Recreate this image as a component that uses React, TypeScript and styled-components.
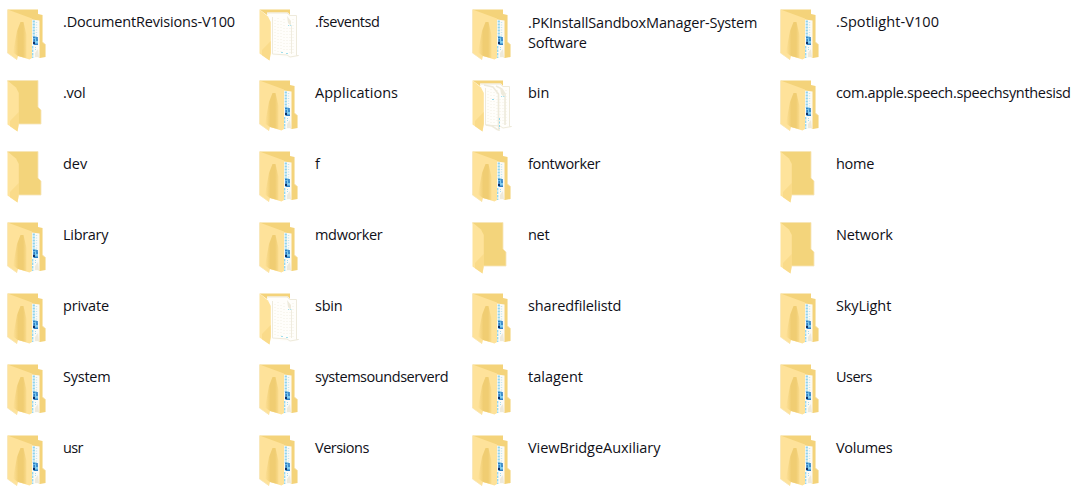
import React from 'react';
import styled, { createGlobalStyle } from 'styled-components';

const GlobalStyle = createGlobalStyle`
  body { margin: 0; background: #fff; overflow: hidden; }
`;

const FolderGrid = styled.main`
  display: grid;
  grid-template-columns: 252px 213px 308px 292px;
  grid-auto-rows: 71px;
  width: 1079px;
  height: 494px;
  padding: 8px 0 0 7px;
  box-sizing: border-box;
  overflow: hidden;
  font-family: 'Open Sans', 'Noto Sans', sans-serif;
  color: #101018;
`;

const FolderTile = styled.div`
  display: flex;
  align-items: flex-start;
`;

const FolderArt = styled.svg`
  flex: none;
  width: 42px;
  height: 56px;
`;

const Label = styled.span<{ $tracking: number; $lines: number }>`
  margin: ${p => (p.$lines === 2 ? 5 : 4)}px 0 0 14px;
  font-size: 14.5px;
  line-height: 20px;
  letter-spacing: ${p => p.$tracking}px;
  white-space: pre;
`;

type Kind = 'full' | 'empty' | 'page' | 'pages';

const Flap = () => (
  <>
    <path d="M.5 1.5 9 8.5 11.8 14V45L10.5 52.5.5 45.5Z" fill="#fee39b" />
    <path d="M3 42 11.8 33V45L10.5 52.5 3 47.2Z" fill="#f7d781" opacity=".65" />
  </>
);

function FolderIcon({ kind }: { kind: Kind }) {
  return (
    <FolderArt viewBox="0 0 42 56" aria-hidden="true">
      <defs>
        <linearGradient id="crease" x1="0" x2="1">
          <stop offset="0" stopColor="#f0cd72" stopOpacity="0" />
          <stop offset=".4" stopColor="#f0cd72" />
          <stop offset=".75" stopColor="#f0cd72" />
          <stop offset="1" stopColor="#f0cd72" stopOpacity=".3" />
        </linearGradient>
      </defs>
      {kind === 'full' && (
        <>
          <path d="M.5 1.5H31V6L35.5 7V34L38.5 36.5V49L33 50 24 46Z" fill="#f4d37a" />
          <path d="M25 11.5 32.5 12.5V49.5L24 50Z" fill="#fbfaf5" />
          <path d="M26.8 12.5V29" stroke="#8fd3ed" strokeWidth="2.2" strokeDasharray="2 1" />
          <path d="M29.5 14V28" stroke="#c4e5ef" strokeWidth="1.4" strokeDasharray="1 1.5" />
          <path d="M26 28.5H30V31H31V37H26Z" fill="#80cdf0" />
          <path d="M26 29.5H28.5M30 29V33M27.2 31V33.5M27 36.3H31" stroke="#3080c5" strokeWidth="1.6" />
          <path d="M26 33.8H28V36H26Z" fill="#102f66" />
          <path d="M25.6 38V50" stroke="#94d7f1" strokeWidth="1.5" strokeDasharray="2.5 1" />
          <path d="M28.5 39V43" stroke="#a6dcef" strokeDasharray="1 1" />
          <path d="M28 49V45L31 41 32 49Z" fill="#eeeadc" />
          <path d="M.5 1.5 25 10.5V50L22.5 51.5 11 48 10 52 .5 45Z" fill="#fee29a" />
          <path d="M10 23 13.5 14H16.5L19.5 27V50.3L11 48 6 44.5Z" fill="url(#crease)" />
          <path d="M.5 2V45L10 51.5M35.5 7V34L38.5 36.5V49" fill="none" stroke="#f8e6b6" strokeWidth=".8" />
        </>
      )}
      {kind === 'empty' && (
        <>
          <path d="M.5 1.5H31V28L34 31V45H11Z" fill="#f3d47b" />
          <Flap />
          <path d="M.5 1.5H31V28L34 31V45H11.5" fill="none" stroke="#f6e4b7" strokeWidth=".8" />
        </>
      )}
      {(kind === 'page' || kind === 'pages') && (
        <>
          <path d="M.5 1.5H31V7H8Z" fill="#f4d37a" />
          <path d="M8 4.5H29L31 7H37.5V48L39 49 31 50 12 47Z" fill="#fffefb" />
          <Flap />
          <path d="M8.5 5H28L31 7.5H37.5V47.5H39.5L31 49 28 47 13.5 46V9" fill="none" stroke="#eeeadb" />
          <path d="M16 12V44M19 10V44M22 13V44M25 11V44M28 20V44M31 20V46M34 11V46" stroke="#f3f0e4" strokeDasharray="1 2" />
          <path d="M28 8 32 13V18L29 15Z" fill="#eeeadb" />
          {kind === 'page' ? (
            <>
              <path d="M32.5 18V46" stroke="#f0ecdf" />
              <path d="M22 44.5H24M27 45.5H29" stroke="#a2dfec" strokeWidth="1.2" />
            </>
          ) : (
            <>
              <path d="M12 6 21 8 26.5 15V46L27 52M24 7 30 10 33 15V46M14 46 20 47 26 51" fill="none" stroke="#eeeadb" strokeWidth="1.6" />
              <path d="M20 20.5H22M27.5 39V50" stroke="#91d8ec" strokeDasharray="2 1.5" />
            </>
          )}
          <path d="M29 17.5H33" stroke="#a2dfec" strokeDasharray="1.2 1" />
        </>
      )}
    </FolderArt>
  );
}

type Folder = { name: string; kind?: Kind; tracking?: number };

const folders: Folder[] = [
  { name: '.DocumentRevisions-V100', tracking: -0.17 },
  { name: '.fseventsd', kind: 'page', tracking: -0.45 },
  { name: '.PKInstallSandboxManager-System\nSoftware', tracking: -0.16 },
  { name: '.Spotlight-V100', tracking: 0.07 },
  { name: '.vol', kind: 'empty', tracking: -0.25 },
  { name: 'Applications', tracking: 0.04 },
  { name: 'bin', kind: 'pages' },
  { name: 'com.apple.speech.speechsynthesisd', tracking: -0.33 },
  { name: 'dev', kind: 'empty' },
  { name: 'f' },
  { name: 'fontworker', tracking: -0.3 },
  { name: 'home', kind: 'empty', tracking: -0.3 },
  { name: 'Library', tracking: -0.3 },
  { name: 'mdworker', tracking: -0.3 },
  { name: 'net', kind: 'empty', tracking: -0.3 },
  { name: 'Network', kind: 'empty', tracking: -0.15 },
  { name: 'private', tracking: -0.15 },
  { name: 'sbin', kind: 'page', tracking: -0.25 },
  { name: 'sharedfilelistd', tracking: -0.15 },
  { name: 'SkyLight', tracking: -0.1 },
  { name: 'System', tracking: -0.25 },
  { name: 'systemsoundserverd', tracking: -0.45 },
  { name: 'talagent' },
  { name: 'Users', tracking: -0.5 },
  { name: 'usr', tracking: -0.6 },
  { name: 'Versions', tracking: -0.5 },
  { name: 'ViewBridgeAuxiliary', tracking: -0.05 },
  { name: 'Volumes', tracking: -0.3 },
];

export default function App() {
  return (
    <>
      <GlobalStyle />
      <FolderGrid>
        {folders.map(({ name, kind = 'full', tracking = 0 }) => (
          <FolderTile key={name}>
            <FolderIcon kind={kind} />
            <Label $tracking={tracking} $lines={name.split('\n').length}>{name}</Label>
          </FolderTile>
        ))}
      </FolderGrid>
    </>
  );
}
